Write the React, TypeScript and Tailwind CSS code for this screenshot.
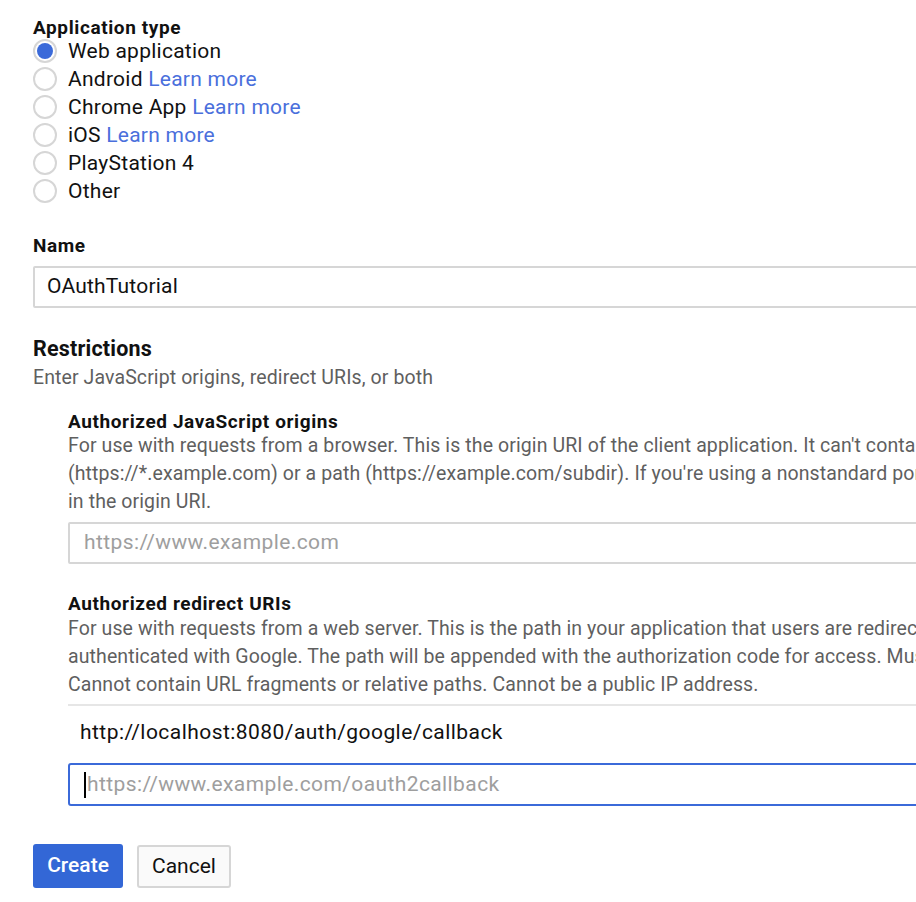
import React from "react";

function Radio({ checked }: { checked?: boolean }) {
  return (
    <span className="flex h-[24px] w-[24px] shrink-0 items-center justify-center rounded-full border-2 border-[#d6d6d6] bg-white">
      {checked && <span className="h-[16px] w-[16px] rounded-full bg-[#3b6ad9]" />}
    </span>
  );
}

function RadioRow({ label, link, checked }: { label: string; link?: boolean; checked?: boolean }) {
  return (
    <div className="flex h-[28px] items-center gap-[11px]">
      <Radio checked={checked} />
      <span className="text-[21px] leading-[28px] tracking-[0.25px] text-[#111]">
        {label}
        {link && <span className="text-[#4a6fdc]"> Learn more</span>}
      </span>
    </div>
  );
}

export default function App() {
  return (
    <div className="h-[902px] w-[916px] overflow-hidden bg-white font-['Roboto',sans-serif]">
      <div className="w-[1400px] pl-[33px] pt-[16px]">
        <div className="text-[19px] font-bold leading-[24px] tracking-[0.6px] text-[#111]">Application type</div>
        <div className="-mt-[3px] flex flex-col">
          <RadioRow label="Web application" checked />
          <RadioRow label="Android" link />
          <RadioRow label="Chrome App" link />
          <RadioRow label="iOS" link />
          <RadioRow label="PlayStation 4" />
          <RadioRow label="Other" />
        </div>

        <div className="mt-[29px] text-[19px] font-bold leading-[24px] tracking-[0.6px] text-[#111]">Name</div>
        <div className="mt-[8px] flex h-[42px] w-[1000px] items-center rounded-[2px] border-2 border-[#d6d6d6] px-[12px] text-[21px] tracking-[0.2px] text-[#111]">
          OAuthTutorial
        </div>

        <div className="mt-[27px] text-[21.5px] font-bold leading-[28px] tracking-[0.2px] text-[#111]">Restrictions</div>
        <div className="mt-[1px] text-[19.5px] leading-[28px] tracking-[0.1px] text-[#5f5f5f]">Enter JavaScript origins, redirect URIs, or both</div>

        <div className="pl-[35px]">
          <div className="mt-[19px] text-[19px] font-bold leading-[22px] tracking-[0.6px] text-[#111]">Authorized JavaScript origins</div>
          <div className="-mt-[1px] whitespace-nowrap text-[19.5px] leading-[28px] tracking-[0.1px] text-[#5f5f5f]">
            <div>For use with requests from a browser. This is the origin URI of the client application. It can't contain a wildcard</div>
            <div>(https://*.example.com) or a path (https://example.com/subdir). If you're using a nonstandard port, you must include it</div>
            <div>in the origin URI.</div>
          </div>
          <div className="mt-[6px] flex h-[42px] w-[1000px] items-center rounded-[2px] border-2 border-[#d6d6d6] px-[14px] text-[21px] tracking-[0.4px] text-[#9e9e9e]">
            https://www.example.com
          </div>

          <div className="mt-[29px] text-[19px] font-bold leading-[22px] tracking-[0.6px] text-[#111]">Authorized redirect URIs</div>
          <div className="whitespace-nowrap text-[19.5px] leading-[28px] tracking-[0.1px] text-[#5f5f5f]">
            <div>For use with requests from a web server. This is the path in your application that users are redirected to after they have</div>
            <div>authenticated with Google. The path will be appended with the authorization code for access. Must have a protocol.</div>
            <div>Cannot contain URL fragments or relative paths. Cannot be a public IP address.</div>
          </div>
          <div className="mt-[5px] h-[2px] w-[1000px] bg-[#e6e6e6]" />
          <div className="flex h-[53px] items-center pl-[12px] text-[21px] tracking-[0.45px] text-[#111]">
            http://localhost:8080/auth/google/callback
          </div>
          <div className="mt-[4px] flex h-[43px] w-[1000px] items-center rounded-[3px] border-2 border-[#3b6ad9] pl-[14px] text-[21px] tracking-[0.4px] text-[#9e9e9e]">
            <span className="mr-[1px] inline-block h-[26px] w-[2px] bg-black" />
            https://www.example.com/oauth2callback
          </div>
        </div>

        <div className="mt-[38px] flex items-start gap-[14px]">
          <button className="flex h-[44px] w-[90px] items-center justify-center rounded-[3px] bg-[#3367d6] text-[21px] font-medium text-white">
            Create
          </button>
          <button className="mt-[1px] flex h-[43px] w-[94px] items-center justify-center rounded-[3px] border-2 border-[#d6d6d6] bg-[#fafafa] text-[21px] text-[#111]">
            Cancel
          </button>
        </div>
      </div>
    </div>
  );
}
